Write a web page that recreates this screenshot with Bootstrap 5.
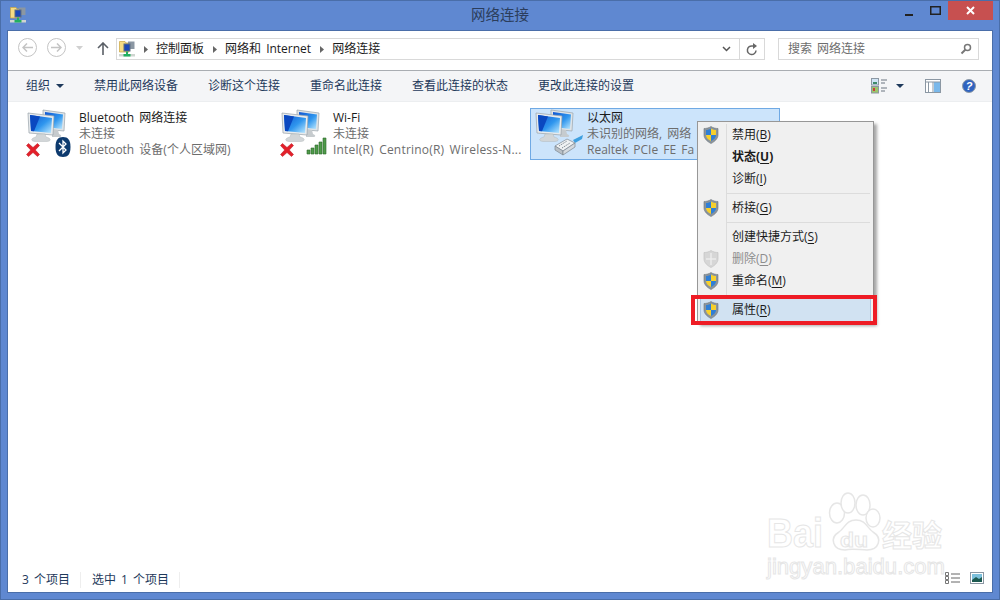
<!DOCTYPE html>
<html lang="zh">
<head>
<meta charset="UTF-8">
<title>网络连接</title>
<link href="https://cdn.jsdelivr.net/npm/bootstrap@5.3.0/dist/css/bootstrap.min.css" rel="stylesheet">
<style>
body {
    width: 1000px; height: 600px; overflow: hidden; position: relative;
    background: #5f88d1;
    box-shadow: inset 0 0 0 1px #4a6ea9;
    font-family: "Open Sans", "Noto Sans CJK SC", sans-serif;
    font-size: 12px; line-height: 16px; color: #1b1b1b; word-spacing: 2px;
}
.win-title { height: 31px; position: relative; }
.win-name { font-size: 14.5px; color: #2b3d5c; line-height: 30px; }
.win-icon { position: absolute; left: 10px; top: 7px; }
.win-btns { position: absolute; right: 7px; top: 1px; height: 19px; }
.win-close { width: 45px; height: 19px; background: #c75050; }
.win-ctl { width: 26px; height: 19px; }
.client { height: 561px; margin: 0 8px; background: #fff; outline: 1px solid #4a6ea9; position: relative; }
.nav-row { height: 39px; padding: 7px 13px 0 10px; background: #fff; }
.round-btn { width: 19px; height: 19px; border: 1px solid #c4c4c4; border-radius: 50%; margin-right: 10px; }
.up-arrow { margin: 4px 0 0 14px; }
.addr-box { width: 649px; height: 22px; margin-left: 7px; border: 1px solid #d9d9d9; }
.addr-pic { margin-left: 2px; }
.addr-txt { white-space: nowrap; }
.addr-arrow { margin: 0 8px 0 9px; }
.addr-sep { border-left: 1px solid #d9d9d9; width: 25px; height: 20px; }
.search-box { width: 201px; height: 22px; margin-left: 13px; border: 1px solid #d9d9d9; padding: 0 6px 0 9px; color: #6d6d6d; }
.tool-row { height: 32px; background: #f4f5f7; border-top: 1px solid #a9adb2; border-bottom: 1px solid #eceef0; padding: 0 16px 0 18px; color: #1e395b; }
.tool-row .cmd { margin-right: 30px; white-space: nowrap; }
.drop-tri { margin-left: 6px; }
.tool-icons { gap: 21px; }
.conn-list { padding: 6px 0 0 14px; }
.conn-item { width: 250px; height: 52px; margin-right: 4px; padding-left: 3px; border: 1px solid transparent; position: relative; flex: none; }
.conn-item.sel { background: #cce4fb; border-color: #6fa9e4; }
.conn-pic { width: 50px; height: 50px; flex: none; }
.pic-a { position: absolute; left: 0; top: 34px; }
.pic-b { position: absolute; left: 29px; top: 28px; }
.pic-c { position: absolute; left: 26px; top: 28px; }
.pic-d { position: absolute; left: 20px; top: 25px; }
.conn-txt { padding: 1px 0 0 3px; white-space: nowrap; flex: 1; }
.conn-sub { color: #6d6d6d; }
.conn-wide { letter-spacing: .2px; }
.ctx-menu {
    position: absolute; left: 689px; top: 90px; width: 177px; height: 202px;
    background: #f0f0f0; border: 1px solid #979797; padding: 2px 2px 1px;
    box-shadow: 3px 3px 3px rgba(0,0,0,.35);
}
.ctx-rail { position: absolute; left: 28px; top: 2px; bottom: 2px; border-left: 1px solid #dcdcdc; }
.ctx-item { height: 22px; line-height: 22px; padding-left: 32px; position: relative; white-space: nowrap; }
.ctx-item svg { position: absolute; left: 3px; top: 2px; }
.ctx-item u { text-underline-offset: 2px; }
.ctx-off { color: #8d8d8d; }
.ctx-sep { height: 7px; margin-left: 27px; margin-right: 1px; position: relative; }
.ctx-sep::after { content: ""; position: absolute; left: 0; right: 0; top: 3px; border-top: 1px solid #dcdcdc; }
.ctx-hot { background: #d1e2f2; box-shadow: inset 1px 0 0 #a9c6e4, inset -1px 0 0 #a9c6e4; }
.red-box { position: absolute; left: 683px; top: 264px; width: 186px; height: 30px; border: 4px solid #ee1c25; z-index: 3; }
.status-row { position: absolute; left: 14px; right: 0; bottom: 2px; height: 20px; color: #1e395b; }
.status-cell { border-right: 1px solid #eee; padding-right: 10px; margin-right: 11px; white-space: nowrap; }
.status-icons { position: absolute; right: 8px; top: 2px; gap: 9px; }
.wm-mark { position: absolute; left: 762px; top: 490px; width: 210px; height: 100px; pointer-events: none; }
.wm-txt { fill: #fff; stroke: #e6e6e6; stroke-width: 1; font-family: "Liberation Sans", sans-serif; }
.wm-cjk { font-family: "Noto Sans CJK SC", sans-serif; }
.wm-paw { fill: #fff; stroke: #e6e6e6; stroke-width: 1.5; }
</style>
</head>
<body>
<svg width="0" height="0" class="position-absolute">
    <defs>
        <linearGradient id="scrn" x1="0" y1="0" x2="1" y2="1"><stop offset="0" stop-color="#0f55d2"/><stop offset=".55" stop-color="#2f96ee"/><stop offset="1" stop-color="#bfeaff"/></linearGradient>
        <symbol id="pcs" viewBox="0 0 40 40">
            <path d="M17 1 L39 4 L38 22 L17 20Z" fill="#dfe4e8" stroke="#9aa4ab" stroke-width=".7"/>
            <path d="M19 3 L37 5.500 L36 20 L19 18Z" fill="url(#scrn)"/>
            <path d="M26 21 h6 l1 4 c3 1 3 3 0 3 h-7z" fill="#c6cbce"/>
            <path d="M2 4 L28 7 L27 26 L3 24Z" fill="#e8ebed" stroke="#98a2a9" stroke-width=".7"/>
            <path d="M4 6 L26 9 L25 24 L5 22Z" fill="url(#scrn)"/>
            <path d="M4 6 L14 7.400 L8 22.300 L5 22Z" fill="#0a48c0"/>
            <path d="M11 25 h8 l1 3 c5 1 6 4 1 4.500 h-12 c-5 -.5 -4 -3.500 1 -4.500z" fill="#d2d6d8" stroke="#aab0b4" stroke-width=".4"/>
        </symbol>
        <symbol id="redx" viewBox="0 0 14 14">
            <path d="M.5 2.500 L2.500 .5 L7 4.500 L11.500 .5 L13.500 2.500 L9.300 7 L13.500 11.500 L11.500 13.500 L7 9.500 L2.500 13.500 L.5 11.500 L4.700 7Z" fill="#e3202a" stroke="#b5141c" stroke-width=".5"/>
        </symbol>
        <symbol id="shield" viewBox="0 0 16 18">
            <path d="M8 .5 C10 2 13 2.500 15 2.500 V9 C15 13 11 16 8 17.500 C5 16 1 13 1 9 V2.500 C3 2.500 6 2 8 .5Z" fill="#8b949c" stroke="#6c757c" stroke-width=".6"/>
            <path d="M8 2.500 C6 3.500 4.500 4 3 4 V9 H8Z" fill="#2f7fd6"/>
            <path d="M8 2.500 C10 3.500 11.500 4 13 4 V9 H8Z" fill="#f7d02c"/>
            <path d="M3 9 H8 V15 C5.500 13.800 3 12 3 9Z" fill="#f7d02c"/>
            <path d="M13 9 H8 V15 C10.500 13.800 13 12 13 9Z" fill="#2f7fd6"/>
        </symbol>
        <symbol id="shield-off" viewBox="0 0 16 18">
            <path d="M8 .5 C10 2 13 2.500 15 2.500 V9 C15 13 11 16 8 17.500 C5 16 1 13 1 9 V2.500 C3 2.500 6 2 8 .5Z" fill="#d6d6d6" stroke="#bdbdbd" stroke-width=".6"/>
            <path d="M8 3 V15 M3 9 H13" stroke="#ececec" stroke-width="1.500"/>
        </symbol>
        <symbol id="folder" viewBox="0 0 16 16">
            <path d="M.5 .5 H6 L7 2 H10 V11 H.5Z" fill="#f6dc84" stroke="#c9a33f" stroke-width=".7"/>
            <path d="M9 .5 H15.500 V8 H9Z" fill="#8b97a3"/>
            <path d="M4.500 2.500 H11.500 V10.500 H4.500Z" fill="#5d6d80"/>
            <path d="M5.500 3.500 H10.500 V9.500 H5.500Z" fill="#1c48b8"/>
            <path d="M0 13 H16 V15.500 H0Z" fill="#cfd5d0"/>
            <path d="M7 10.500 H9 V13 H7Z M4.500 13 H11.500 V15.500 H4.500Z" fill="#22b060"/>
        </symbol>
    </defs>
</svg>

<div class="win-title d-flex justify-content-center">
    <svg class="win-icon" width="16" height="16"><use href="#folder"/></svg>
    <div class="win-name">网络连接</div>
    <div class="win-btns d-flex">
        <div class="win-ctl d-flex align-items-center justify-content-center"><svg width="10" height="10"><rect x="1" y="8" width="8" height="2" fill="#222"/></svg></div>
        <div class="win-ctl d-flex align-items-center justify-content-center"><svg width="11" height="9"><rect x=".75" y=".75" width="9.500" height="7.500" fill="none" stroke="#222" stroke-width="1.500"/></svg></div>
        <div class="win-close d-flex align-items-center justify-content-center"><svg width="9" height="9"><path d="M1 1 L8 8 M8 1 L1 8" stroke="#fff" stroke-width="2"/></svg></div>
    </div>
</div>

<div class="client">
    <div class="nav-row d-flex align-items-start">
        <div class="round-btn d-flex align-items-center justify-content-center"><svg width="11" height="9"><path d="M5 .5 L1 4.500 L5 8.500 M1 4.500 H11" fill="none" stroke="#c4c4c4" stroke-width="1.500"/></svg></div>
        <div class="round-btn d-flex align-items-center justify-content-center"><svg width="11" height="9"><path d="M6 .5 L10 4.500 L6 8.500 M10 4.500 H0" fill="none" stroke="#c4c4c4" stroke-width="1.500"/></svg></div>
        <svg class="mt-2" width="7" height="4"><path d="M0 0 H7 L3.500 4Z" fill="#d0d0d0"/></svg>
        <svg class="up-arrow" width="12" height="13"><path d="M6 1 V13 M1 6 L6 1 L11 6" fill="none" stroke="#5a5f66" stroke-width="1.600"/></svg>
        <div class="addr-box d-flex align-items-center">
            <svg class="addr-pic" width="16" height="16"><use href="#folder"/></svg>
            <div class="addr-txt flex-grow-1 d-flex align-items-center">
                <svg class="addr-arrow" width="4" height="7"><path d="M0 0 L4 3.500 L0 7Z" fill="#666"/></svg><span>控制面板</span>
                <svg class="addr-arrow" width="4" height="7"><path d="M0 0 L4 3.500 L0 7Z" fill="#666"/></svg><span>网络和 Internet</span>
                <svg class="addr-arrow" width="4" height="7"><path d="M0 0 L4 3.500 L0 7Z" fill="#666"/></svg><span>网络连接</span>
            </div>
            <svg class="me-2" width="9" height="6"><path d="M1 1 L4.500 4.500 L8 1" fill="none" stroke="#555" stroke-width="1.500"/></svg>
            <div class="addr-sep d-flex align-items-center justify-content-center"><svg width="12" height="13" viewBox="0 0 12 13"><path d="M10 7.500 A4.300 4.300 0 1 1 6.500 3 H8" fill="none" stroke="#666" stroke-width="1.500"/><path d="M7 0 L11 3 L7 6Z" fill="#666"/></svg></div>
        </div>
        <div class="search-box d-flex align-items-center justify-content-between">
            <span>搜索 网络连接</span>
            <svg width="12" height="12"><circle cx="7.500" cy="4.500" r="3" fill="none" stroke="#777" stroke-width="1.500"/><path d="M5.500 6.500 L1.500 10.500" stroke="#777" stroke-width="2"/></svg>
        </div>
    </div>

    <div class="tool-row d-flex align-items-center">
        <div class="cmd d-flex align-items-center">组织<svg class="drop-tri" width="8" height="4"><path d="M0 0 H8 L4 4Z" fill="#1e395b"/></svg></div>
        <div class="cmd">禁用此网络设备</div>
        <div class="cmd">诊断这个连接</div>
        <div class="cmd">重命名此连接</div>
        <div class="cmd">查看此连接的状态</div>
        <div class="cmd">更改此连接的设置</div>
        <div class="tool-icons ms-auto d-flex align-items-center">
            <svg width="33" height="16"><rect x=".5" y=".5" width="7" height="6.500" fill="#cfe4f5" stroke="#8b97a3"/><rect x="2" y="4" width="4" height="2" fill="#3d8a6a"/><rect x=".5" y="8.500" width="7" height="6.500" fill="#9bc66b" stroke="#8b97a3"/><rect x="2" y="10" width="2" height="3" fill="#c8403a"/><path d="M10 2 H16 M10 5 H14 M10 10 H16 M10 13 H14" stroke="#6a7580"/><path d="M25 6 H33 L29 10Z" fill="#1e395b"/></svg>
            <svg width="16" height="14"><rect x=".5" y=".5" width="15" height="13" fill="#fff" stroke="#8b97a3"/><rect x="9" y="3" width="6" height="10" fill="#7ab8ea"/><path d="M.5 3 H15.500 M3.500 3 V13.500 M8 3 V13.500" stroke="#8b97a3"/></svg>
            <svg width="14" height="14"><circle cx="7" cy="7" r="6.500" fill="#2f63c0" stroke="#8e9aa6"/><text x="7" y="11" text-anchor="middle" font-size="11" font-weight="700" font-style="italic" fill="#fff" font-family="Liberation Sans">?</text></svg>
        </div>
    </div>

    <div class="conn-list d-flex">
        <div class="conn-item d-flex">
            <div class="conn-pic position-relative">
                <svg width="40" height="40"><use href="#pcs"/></svg>
                <svg class="pic-a" width="14" height="14"><use href="#redx"/></svg>
                <svg class="pic-b" width="16" height="20"><path d="M8 0 C13 0 15.500 3 15.500 10 C15.500 17 13 20 8 20 C3 20 .5 17 .5 10 C.5 3 3 0 8 0Z" fill="#0d3a6e"/><path d="M4 6 L11 13 L8 16 V4 L11 7 L4 14" fill="none" stroke="#fff" stroke-width="1.300"/></svg>
            </div>
            <div class="conn-txt">
                <div>Bluetooth 网络连接</div>
                <div class="conn-sub">未连接</div>
                <div class="conn-sub">Bluetooth 设备(个人区域网)</div>
            </div>
        </div>
        <div class="conn-item d-flex">
            <div class="conn-pic position-relative">
                <svg width="40" height="40"><use href="#pcs"/></svg>
                <svg class="pic-a" width="14" height="14"><use href="#redx"/></svg>
                <svg class="pic-c" width="22" height="18"><path d="M1 13 H4 V17 H1Z M5 11 H8 V17 H5Z M9 8 H12 V17 H9Z M13 5 H16 V17 H13Z M17 1 H20 V17 H17Z" fill="#4f9a4a" stroke="#2c6a2a" stroke-width=".6"/></svg>
            </div>
            <div class="conn-txt">
                <div>Wi-Fi</div>
                <div class="conn-sub">未连接</div>
                <div class="conn-sub conn-wide">Intel(R) Centrino(R) Wireless-N...</div>
            </div>
        </div>
        <div class="conn-item sel d-flex">
            <div class="conn-pic position-relative">
                <svg width="40" height="40"><use href="#pcs"/></svg>
                <svg class="pic-d" width="30" height="22"><path d="M19 6 L29 1 L28 5 L21 9Z" fill="#3ea0e0"/><path d="M1 12 L13 5 L21 9 L9 17Z" fill="#f0f2f3" stroke="#7d8790" stroke-width=".7"/><path d="M1 12 L9 17 L9 21 L1 16Z" fill="#b9c0c6" stroke="#7d8790" stroke-width=".7"/><path d="M9 17 L21 9 L21 13 L9 21Z" fill="#d5dade" stroke="#7d8790" stroke-width=".7"/><path d="M5 12 L13 7 M8 14 L16 9" stroke="#7d8790" stroke-width="1" stroke-dasharray="1.500 1"/></svg>
            </div>
            <div class="conn-txt">
                <div>以太网</div>
                <div class="conn-sub">未识别的网络, 网络</div>
                <div class="conn-sub">Realtek PCIe FE Fa</div>
            </div>
        </div>
    </div>

    <div class="ctx-menu">
        <div class="ctx-rail"></div>
        <div class="ctx-item"><svg width="16" height="18"><use href="#shield"/></svg>禁用(<u>B</u>)</div>
        <div class="ctx-item fw-bold"><span>状态(<u>U</u>)</span></div>
        <div class="ctx-item">诊断(<u>I</u>)</div>
        <div class="ctx-sep"></div>
        <div class="ctx-item"><svg width="16" height="18"><use href="#shield"/></svg>桥接(<u>G</u>)</div>
        <div class="ctx-sep"></div>
        <div class="ctx-item">创建快捷方式(<u>S</u>)</div>
        <div class="ctx-item ctx-off"><svg width="16" height="18"><use href="#shield-off"/></svg>删除(<u>D</u>)</div>
        <div class="ctx-item"><svg width="16" height="18"><use href="#shield"/></svg>重命名(<u>M</u>)</div>
        <div class="ctx-sep"></div>
        <div class="ctx-item ctx-hot"><svg width="16" height="18"><use href="#shield"/></svg>属性(<u>R</u>)</div>
    </div>
    <div class="red-box"></div>

    <div class="status-row d-flex align-items-center">
        <div class="status-cell">3 个项目</div>
        <div class="status-cell">选中 1 个项目</div>
        <div class="status-icons d-flex">
            <svg width="16" height="12"><path d="M.5 .5 H3.500 V3.500 H.5Z M.5 4.500 H3.500 V7.500 H.5Z M.5 8.500 H3.500 V11.500 H.5Z" fill="#fff" stroke="#777"/><path d="M6 2 H15 M6 6 H15 M6 10 H15" stroke="#666"/></svg>
            <svg width="14" height="12"><rect x=".5" y=".5" width="13" height="11" fill="#fff" stroke="#8b97a3"/><rect x="2" y="2" width="10" height="8" fill="#7cc0dc"/><path d="M2 8 L6 5 L9 7 L12 5 V10 H2Z" fill="#1d5a50"/></svg>
        </div>
    </div>
</div>

<svg class="wm-mark" viewBox="0 0 210 100">
    <ellipse class="wm-paw" cx="75" cy="23" rx="7.500" ry="10"/>
    <ellipse class="wm-paw" cx="86" cy="13" rx="7" ry="10"/>
    <ellipse class="wm-paw" cx="101" cy="15" rx="7" ry="10"/>
    <ellipse class="wm-paw" cx="111" cy="28" rx="7" ry="9"/>
    <path class="wm-paw" d="M94 30 C104 30 105 38 111 42 C121 48 117 60 105 60 C98 60 90 58 83 60 C71 60 67 48 77 42 C83 38 84 30 94 30Z"/>
    <text class="wm-txt" x="5" y="57" font-size="41" font-weight="700" textLength="56" lengthAdjust="spacingAndGlyphs">Bai</text>
    <text class="wm-txt" x="78" y="57" font-size="20" font-weight="700" textLength="28" lengthAdjust="spacingAndGlyphs">du</text>
    <text class="wm-txt wm-cjk" x="120" y="56" font-size="30" font-weight="700">经验</text>
    <text class="wm-txt" x="5" y="84" font-size="22" textLength="178" lengthAdjust="spacingAndGlyphs">jingyan.baidu.com</text>
</svg>
</body>
</html>
